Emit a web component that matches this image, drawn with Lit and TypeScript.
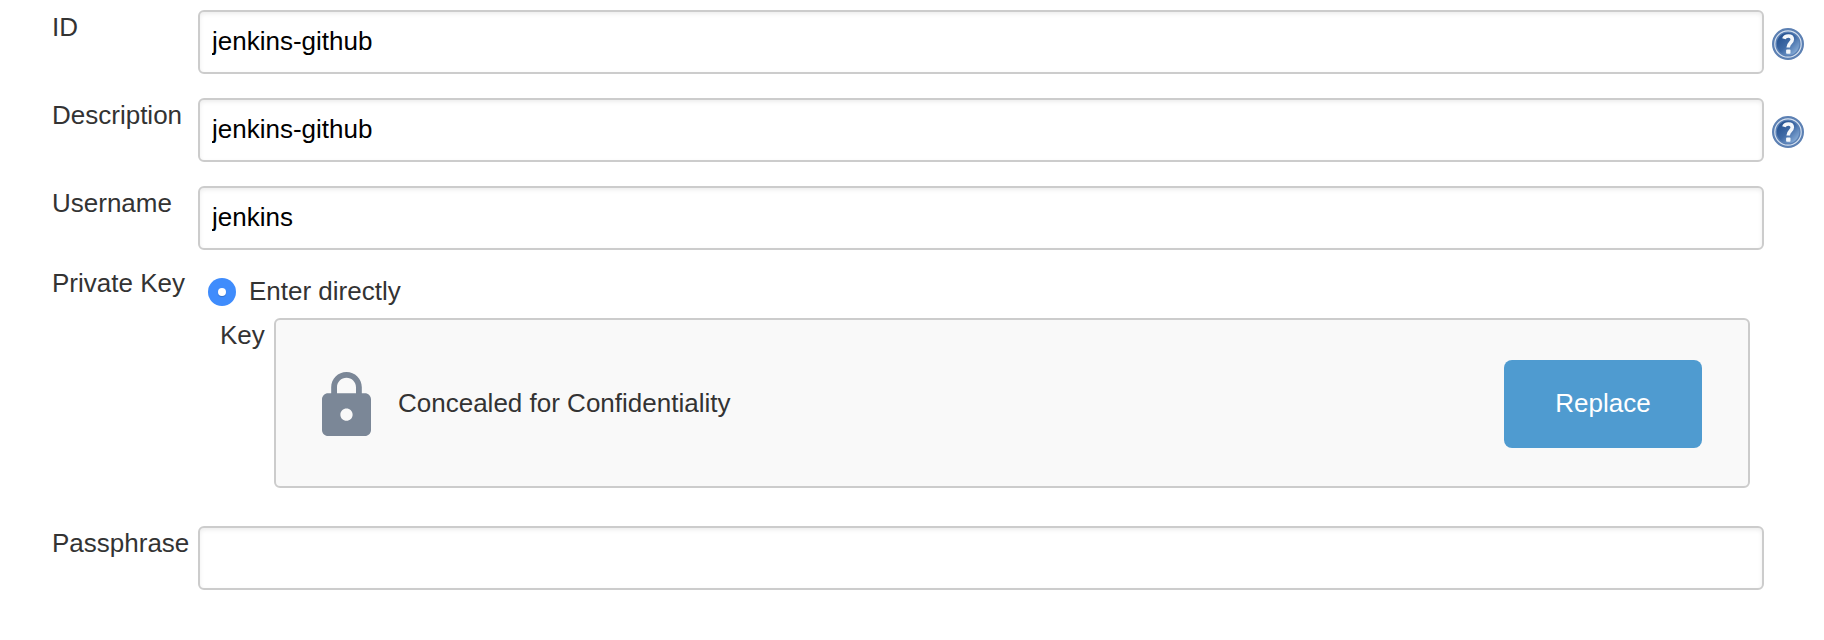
import { LitElement, html, css, svg, nothing } from "lit";
import { customElement, property } from "lit/decorators.js";

@customElement("help-icon")
class HelpIcon extends LitElement {
  static styles = css`
    :host { display: block; width: 32px; height: 32px; }
    .icon { display: block; }
  `;
  render() {
    return html`<svg class="icon" width="32" height="32" viewBox="0 0 32 32">
      ${svg`
        <defs>
          <linearGradient id="disc" x1="0.1" y1="0.1" x2="0.9" y2="0.9">
            <stop offset="0" stop-color="#24508f"/>
            <stop offset="0.5" stop-color="#3f6aa6"/>
            <stop offset="1" stop-color="#8fb3dc"/>
          </linearGradient>
        </defs>
        <circle cx="16" cy="16" r="14.9" fill="#d5e0ef" stroke="#5c80b3" stroke-width="2.2"/>
        <circle cx="16" cy="16" r="11.9" fill="url(#disc)" stroke="#5a80b5" stroke-width="1.4"/>
        <path d="M11.9 10.8 C13 7 20.3 6.8 20.3 11.3 C20.3 14.8 16.2 14.8 16.2 19.6" fill="none" stroke="#f4f7fb" stroke-width="3.6"/>
        <rect x="14.1" y="21.6" width="4.4" height="4.2" rx="0.8" fill="#f4f7fb"/>
      `}
    </svg>`;
  }
}

@customElement("form-row")
class FormRow extends LitElement {
  @property() label = "";
  @property() value = "";
  @property({ type: Boolean }) help = false;
  static styles = css`
    :host { display: grid; grid-template-columns: 146px 1566px 40px; height: 64px; }
    .label { padding-top: 2px; line-height: 30px; color: #333; white-space: nowrap; }
    .field {
      box-sizing: border-box; width: 1566px; height: 64px; margin: 0; padding: 0 12px 2px;
      border: 2px solid #ccc; border-radius: 6px; background: #fff; color: #000;
      font: inherit; box-shadow: inset 0 2px 4px rgba(0, 0, 0, 0.075); outline: none;
    }
    .help { margin: 18px 0 0 8px; }
  `;
  render() {
    return html`
      <label class="label">${this.label}</label>
      <input class="field" type="text" .value=${this.value} />
      ${this.help ? html`<help-icon class="help"></help-icon>` : nothing}
    `;
  }
}

@customElement("app-root")
class AppRoot extends LitElement {
  static styles = css`
    :host {
      display: block; box-sizing: border-box; width: 1824px; height: 640px; overflow: hidden;
      padding: 10px 0 0 52px; background: #fff; color: #333;
      font: 26px/30px "Liberation Sans", Arial, sans-serif;
    }
    .rows { display: grid; row-gap: 24px; }
    .private { display: grid; grid-template-columns: 146px 1552px; padding-top: 18px; height: 252px; box-sizing: border-box; margin-bottom: 24px; }
    .name { white-space: nowrap; }
    .choice { display: flex; align-items: center; height: 30px; margin: 8px 0 12px 10px; }
    .radio {
      display: grid; place-items: center; width: 28px; height: 28px; margin: 2px 13px 0 0;
      border-radius: 50%; background: #3f8cfc;
    }
    .dot { width: 8px; height: 8px; border-radius: 50%; background: #fff; box-shadow: 0 1px 1px rgba(0, 0, 0, 0.2); }
    .keyline { display: grid; grid-template-columns: 54px 1476px; padding-left: 22px; }
    .key { padding-top: 2px; }
    .panel {
      display: flex; align-items: center; box-sizing: border-box; height: 170px; padding: 0 46px;
      border: 2px solid #ccc; border-radius: 6px; background: #f9f9f9;
    }
    .lock { display: block; margin-top: 2px; }
    .text { flex: 1; padding: 0 0 1px 27px; }
    .button {
      width: 198px; height: 88px; margin: 2px 0 0; padding: 0 0 2px; border: 0; border-radius: 8px;
      background: #4f9bd0; color: #fff; font: inherit;
    }
  `;
  render() {
    return html`
      <div class="rows">
        <form-row label="ID" value="jenkins-github" help></form-row>
        <form-row label="Description" value="jenkins-github" help></form-row>
        <form-row label="Username" value="jenkins"></form-row>
      </div>
      <div class="private">
        <div class="name">Private Key</div>
        <div>
          <div class="choice">
            <span class="radio"><span class="dot"></span></span>
            <span>Enter directly</span>
          </div>
          <div class="keyline">
            <div class="key">Key</div>
            <div class="panel">
              <svg class="lock" width="49" height="64" viewBox="4 1 16 21" preserveAspectRatio="none">
                <path fill="#7b8797" d="M18 8h-1V6c0-2.76-2.24-5-5-5S7 3.24 7 6v2H6c-1.1 0-2 .9-2 2v10c0 1.1.9 2 2 2h12c1.1 0 2-.9 2-2V10c0-1.1-.9-2-2-2zm-6 9c-1.1 0-2-.9-2-2s.9-2 2-2 2 .9 2 2-.9 2-2 2zm3.1-9H8.9V6c0-1.71 1.39-3.1 3.1-3.1 1.71 0 3.1 1.39 3.1 3.1v2z"/>
              </svg>
              <span class="text">Concealed for Confidentiality</span>
              <button class="button">Replace</button>
            </div>
          </div>
        </div>
      </div>
      <form-row label="Passphrase"></form-row>
    `;
  }
}
